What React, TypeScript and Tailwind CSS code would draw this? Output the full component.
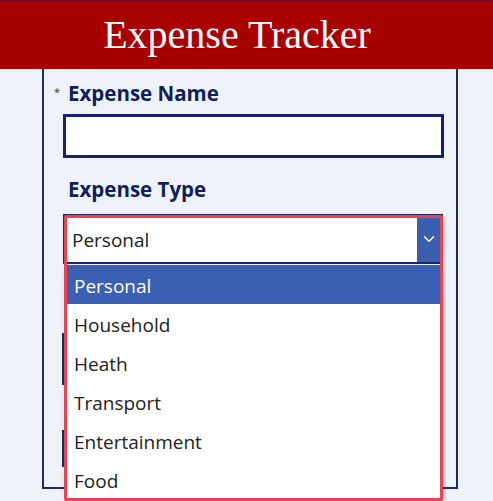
import { ChevronDown } from 'lucide-react';

const options = ['Personal', 'Household', 'Heath', 'Transport', 'Entertainment', 'Food'];

function FieldLabel({ text, required }: { text: string; required?: boolean }) {
  return (
    <div className="flex items-center">
      <span className="w-[15px] pl-[1px] text-[11px] leading-none text-[#333] -mt-[3px]">{required ? '*' : ''}</span>
      <span className="text-[20.5px] leading-[28px] font-bold text-[#0e1f5b]">{text}</span>
    </div>
  );
}

export default function App() {
  const selected = 'Personal';

  return (
    <div className="min-h-screen bg-[#eff2f8] font-['Open_Sans',sans-serif] overflow-hidden">
      <header className="h-[69px] bg-[#a80000] border-t border-[#6e0a2a] flex items-center justify-center pr-[19px]">
        <h1 className="font-['Liberation_Serif',serif] text-[40px] leading-none text-white">
          Expense Tracker
        </h1>
      </header>

      <div className="relative ml-[42px] w-[416px] h-[420px] border-x-2 border-b-2 border-[#1b2a6b] pl-[9px] pt-[10px]">
        <FieldLabel text="Expense Name" required />
        <div className="ml-[10px] mt-[7px] w-[381px] h-[44px] border-[3px] border-[#14236a] bg-white" />

        <div className="mt-[17px]">
          <FieldLabel text="Expense Type" />
        </div>

        <div className="relative ml-[10px] mt-[11px] w-[380px]">
          {/* closed combobox */}
          <div className="h-[50px] border-2 border-[#1b2a6b] flex bg-white">
            <div className="flex-1 flex items-center pl-[7px] pt-[2px] text-[19px] text-[#222]">{selected}</div>
            <div className="w-[24px] bg-[#3a5fb0] flex items-center justify-center">
              <ChevronDown className="w-[18px] h-[18px] text-white" strokeWidth={2} />
            </div>
          </div>

          {/* open list */}
          <ul className="absolute left-[2px] right-[2px] top-[51px] z-10 bg-white shadow-md">
            {options.map(o => (
              <li
                key={o}
                className={`h-[39px] flex items-center pl-[9px] pt-[3px] text-[19px] ${
                  o === selected ? 'bg-[#3a5fb3] text-white' : 'text-[#222]'
                }`}
              >
                {o}
              </li>
            ))}
          </ul>

          {/* highlight annotation */}
          <div className="absolute left-[1px] top-[1px] w-[379px] h-[286px] z-20 border-[3px] border-[#e8434f] rounded-[2px] shadow-[2px_2px_4px_rgba(0,0,0,0.15)] pointer-events-none" />
        </div>

        {/* fields hidden behind the list */}
        <div className="ml-[9px] mt-[69px] w-[380px] h-[52px] border-2 border-[#1b2a6b] bg-white" />
        <div className="ml-[9px] mt-[45px] w-[380px] h-[37px] border-2 border-[#1b2a6b] bg-white" />
      </div>
    </div>
  );
}
